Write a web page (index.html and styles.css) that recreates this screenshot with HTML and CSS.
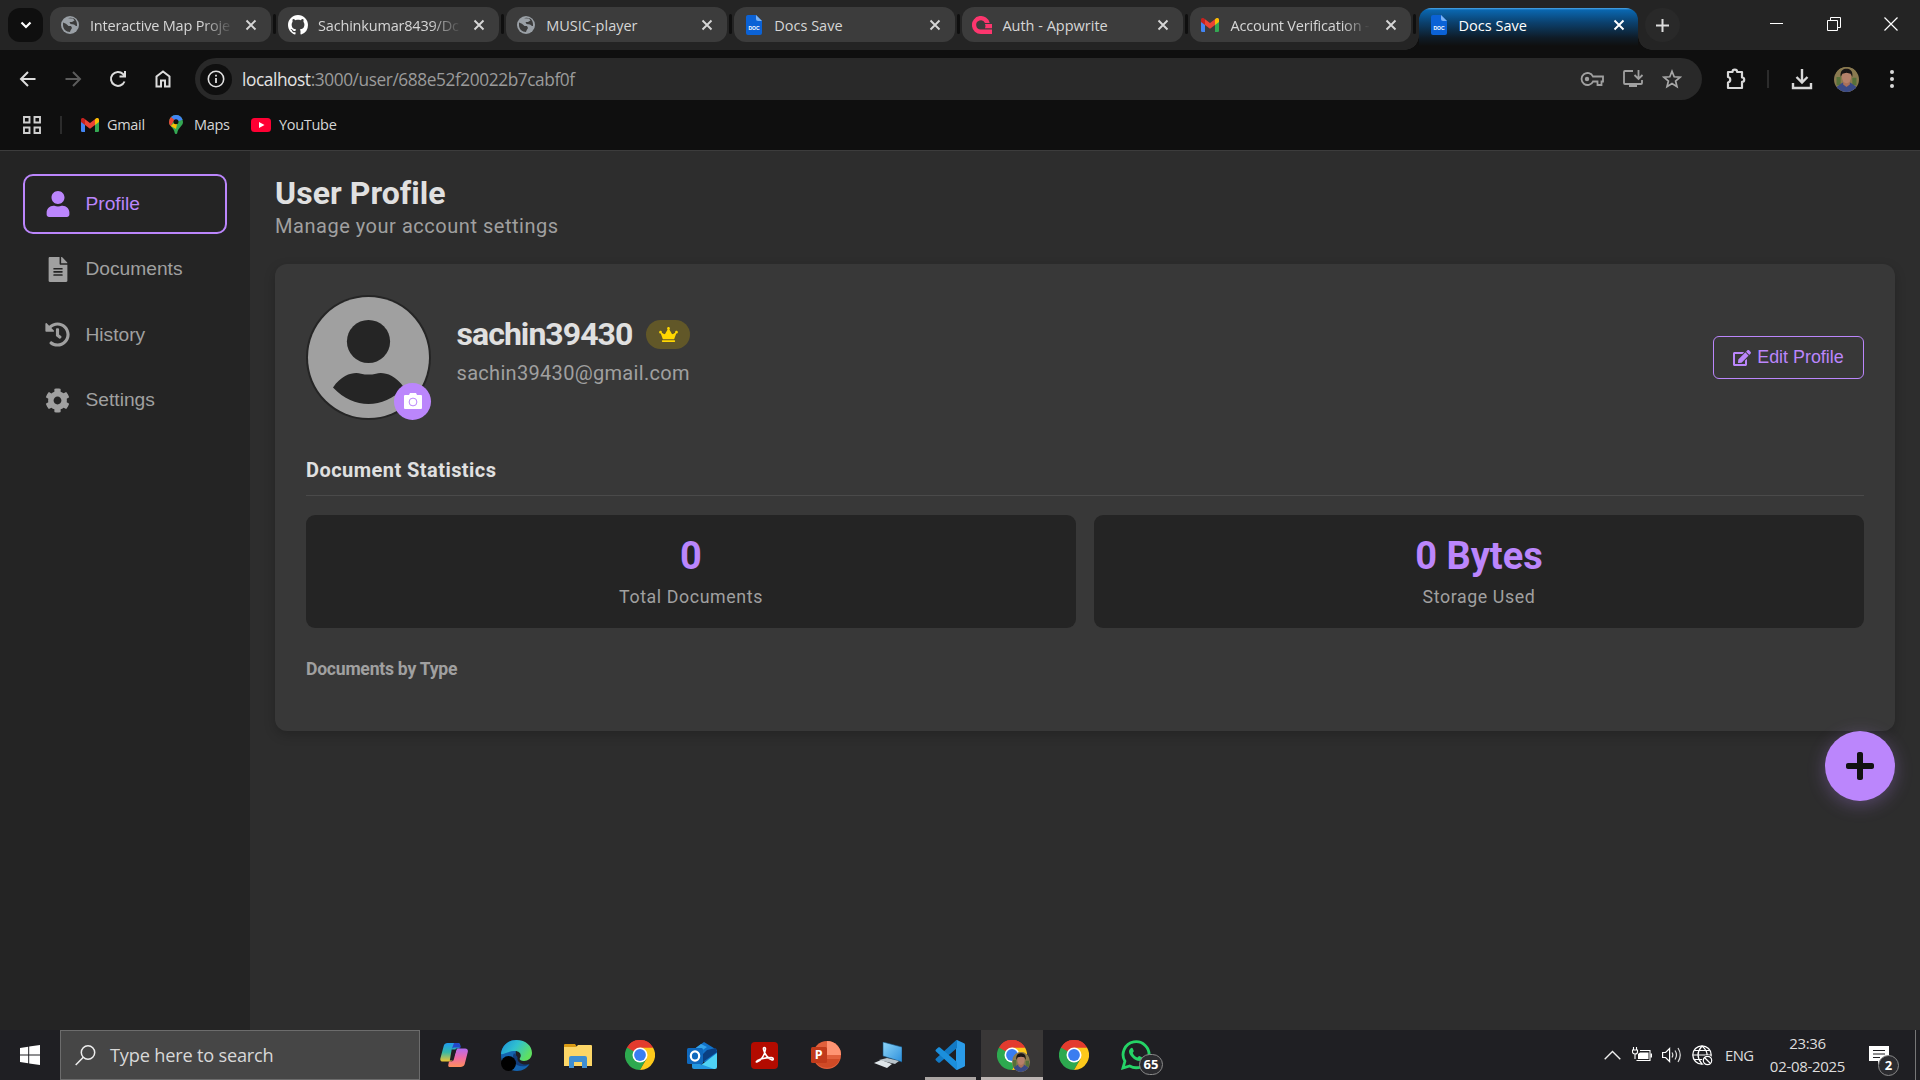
FILE: index.html
```html
<!DOCTYPE html>
<html lang="en">
<head>
<meta charset="utf-8">
<title>Docs Save</title>
<link rel="stylesheet" href="styles.css">
</head>
<body>
<svg class="defs" width="0" height="0">
  <defs>
    <linearGradient id="copA" x1="0" y1="0" x2="0" y2="1"><stop offset="0" stop-color="#1e9bf0"/><stop offset=".5" stop-color="#35b8a8"/><stop offset="1" stop-color="#f2c530"/></linearGradient>
    <linearGradient id="copB" x1="0" y1="0" x2="0" y2="1"><stop offset="0" stop-color="#b36bf0"/><stop offset=".5" stop-color="#ee6ba5"/><stop offset="1" stop-color="#ff8f5a"/></linearGradient>
    <linearGradient id="edgeA" x1="0" y1="0" x2="1" y2=".5"><stop offset="0" stop-color="#1b8fd8"/><stop offset=".5" stop-color="#30c0d0"/><stop offset="1" stop-color="#5fe060"/></linearGradient>
    <linearGradient id="scr" x1="0" y1="0" x2="1" y2="1"><stop offset="0" stop-color="#8fd6f8"/><stop offset="1" stop-color="#2c8fdc"/></linearGradient>
    <symbol id="globe" viewBox="0 0 18 18"><circle cx="9" cy="9" r="9" fill="#9aa0a6"/><path d="M2 6.500l3 1.200 2.500 2.300H10l1 2-1.500 2.500L9 16C5 16 2 13 2 9zM7 2.200l5 .2 1.500 2L11 6H8.500L9.500 8l3.500.500 2 1.500 1 0C16.500 5 14 1.500 9 1.800z" fill="#3c3c3c"/></symbol>
    <symbol id="docfile" viewBox="0 0 16 20"><path d="M2 0h8l6 6v12a2 2 0 0 1-2 2H2a2 2 0 0 1-2-2V2a2 2 0 0 1 2-2z" fill="#0b62d6"/><path d="M10 0l6 6h-4a2 2 0 0 1-2-2z" fill="#7ab2f5"/><text x="8" y="14.500" text-anchor="middle" class="doc-label">DOC</text></symbol>
    <symbol id="gmail" viewBox="0 0 18 14"><path d="M0 2v10.800A1.200 1.200 0 0 0 1.200 14H4V5z" fill="#4285f4"/><path d="M18 2v10.800a1.200 1.200 0 0 1-1.200 1.200H14V5z" fill="#34a853"/><path d="M14 1.200V7l4-3V1.800C18 0 16-.6 14.800.5z" fill="#fbbc04"/><path d="M4 1.200V7L0 4V1.800C0 0 2-.6 3.200.5z" fill="#c5221f"/><path d="M4 1.200l5 3.800 5-3.800V7l-5 3.800L4 7z" fill="#ea4335"/></symbol>
    <symbol id="chrome" viewBox="0 0 30 30"><path d="M15 15L2 7.500A15 15 0 0 1 28 7.500z" fill="#e33b2e"/><path d="M2 7.500A15 15 0 0 0 15 30l6.500-11.200L15 15z" fill="#2da94f"/><path d="M28 7.500A15 15 0 0 1 15 30l6.500-11.200L15 15V7.500z" fill="#fdc91b"/><path d="M2 7.500L8.500 18.700 15 15V7.500z" fill="#2da94f"/><path d="M2 7.500A15 15 0 0 1 28 7.500H15l-6.500 3.700z" fill="#e33b2e"/><circle cx="15" cy="15" r="7.500" fill="#fff"/><circle cx="15" cy="15" r="5.900" fill="#3a7df0"/></symbol>
    <symbol id="face" viewBox="0 0 24 30"><rect width="24" height="30" fill="#8a7a50"/><path d="M0 12h5v10H0zM19 13h5v9h-5z" fill="#56703a"/><path d="M0 30v-6l7-5h10l7 5v6z" fill="#3a4a86"/><path d="M8 17h8v4l-4 3-4-3z" fill="#a9705a"/><ellipse cx="12" cy="12" rx="5.500" ry="7.500" fill="#b5806a"/><path d="M5 12C4 4 8 2 12 2s8 2 7 10l-2-4-5-1-5 1z" fill="#1a1516"/></symbol>
    <symbol id="x" viewBox="0 0 12 12"><path d="M1.500 1.500l9 9M10.500 1.500l-9 9" stroke="currentColor" stroke-width="1.900" fill="none"/></symbol>
  </defs>
</svg>

<header class="tabstrip">
  <button class="tab-search"><svg width="12" height="8" viewBox="0 0 12 8"><path d="M1.500 1.500L6 6l4.500-4.500" stroke="#fff" stroke-width="2.200" fill="none"/></svg></button>
  <div class="tabs">
    <div class="tab"><svg class="fav" width="18" height="18"><use href="#globe"/></svg><span class="tab-title fade">Interactive Map Proje</span><svg class="close" width="12" height="12"><use href="#x"/></svg></div>
    <div class="tab"><svg class="fav" width="20" height="20" viewBox="0 0 16 16"><path fill="#fff" d="M8 0C3.580 0 0 3.580 0 8c0 3.540 2.290 6.530 5.470 7.590.4.070.55-.17.55-.38 0-.19-.01-.82-.01-1.490-2.010.37-2.530-.49-2.690-.94-.09-.23-.48-.94-.82-1.130-.28-.15-.68-.52-.01-.53.63-.01 1.080.58 1.230.82.72 1.210 1.870.87 2.330.66.07-.52.28-.87.51-1.070-1.780-.2-3.640-.89-3.640-3.950 0-.87.31-1.590.82-2.150-.08-.2-.36-1.020.08-2.120 0 0 .67-.21 2.200.82.640-.18 1.320-.27 2-.27s1.360.09 2 .27c1.530-1.040 2.200-.82 2.200-.82.44 1.100.16 1.920.08 2.120.51.56.82 1.270.82 2.150 0 3.070-1.870 3.750-3.650 3.950.29.25.54.73.54 1.480 0 1.070-.01 1.930-.01 2.200 0 .21.15.46.55.38A8.010 8.010 0 0 0 16 8c0-4.420-3.580-8-8-8z"/></svg><span class="tab-title fade">Sachinkumar8439/Dc</span><svg class="close" width="12" height="12"><use href="#x"/></svg></div>
    <div class="tab"><svg class="fav" width="18" height="18"><use href="#globe"/></svg><span class="tab-title">MUSIC-player</span><svg class="close" width="12" height="12"><use href="#x"/></svg></div>
    <div class="tab"><svg class="fav" width="16" height="20"><use href="#docfile"/></svg><span class="tab-title">Docs Save</span><svg class="close" width="12" height="12"><use href="#x"/></svg></div>
    <div class="tab"><svg class="fav" width="20" height="18" viewBox="0 0 20 18"><path d="M20 13.500V18H9A9 9 0 1 1 17.700 7H13A4.600 4.600 0 1 0 9 13.500z" fill="#fd366e"/><path d="M20 8v4.200h-7A4.600 4.600 0 0 0 13 8z" fill="#fd366e"/></svg><span class="tab-title">Auth - Appwrite</span><svg class="close" width="12" height="12"><use href="#x"/></svg></div>
    <div class="tab"><svg class="fav" width="18" height="14"><use href="#gmail"/></svg><span class="tab-title fade short">Account Verification -</span><svg class="close" width="12" height="12"><use href="#x"/></svg></div>
    <div class="tab active"><svg class="fav" width="16" height="20"><use href="#docfile"/></svg><span class="tab-title">Docs Save</span><svg class="close" width="12" height="12"><use href="#x"/></svg></div>
  </div>
  <button class="newtab"><svg width="13" height="13" viewBox="0 0 13 13"><path d="M6.500 0v13M0 6.500h13" stroke="#ddd" stroke-width="2"/></svg></button>
  <div class="winctl">
    <svg width="14" height="14" viewBox="0 0 14 14"><path d="M0 6.500h13" stroke="#fff"/></svg>
    <svg width="14" height="14" viewBox="0 0 14 14"><path d="M.5 3.500h10v10H.5zM3.500 3V.500h10v10H11" stroke="#fff" fill="none"/></svg>
    <svg width="14" height="14" viewBox="0 0 14 14"><path d="M.5.5l13 13M13.500.5l-13 13" stroke="#fff" stroke-width="1.200"/></svg>
  </div>
</header>

<nav class="toolbar">
  <div class="navbtns">
    <svg width="20" height="20" viewBox="0 0 20 20"><path d="M17.500 10H3.500M10 3L3 10l7 7" stroke="#dcdcdc" stroke-width="2" fill="none"/></svg>
    <svg width="20" height="20" viewBox="0 0 20 20"><path d="M2.500 10h14M10 3l7 7-7 7" stroke="#5c5c5c" stroke-width="2" fill="none"/></svg>
    <svg width="20" height="20" viewBox="0 0 20 20"><path d="M16.500 12.500A7 7 0 1 1 15 5l1.500 1.700M17 2v5.500h-5.500" stroke="#dcdcdc" stroke-width="2" fill="none"/></svg>
    <svg width="20" height="20" viewBox="0 0 20 20"><path d="M3.500 17.500V7.500L10 2.500l6.500 5v10H12v-6H8v6z" stroke="#dcdcdc" stroke-width="2" fill="none"/></svg>
  </div>
  <div class="omnibox">
    <span class="info"><svg width="18" height="18" viewBox="0 0 18 18"><circle cx="9" cy="9" r="7.700" stroke="#e0e0e0" stroke-width="1.600" fill="none"/><path d="M9 8v5M9 4.700v1.800" stroke="#e0e0e0" stroke-width="1.800"/></svg></span>
    <span class="url"><b>localhost</b>:3000/user/688e52f20022b7cabf0f</span>
    <span class="omni-icons">
      <svg width="24" height="16" viewBox="0 0 24 16"><path d="M13 5.500A6 6 0 1 0 13 10.500h4.500V14h4v-3.500H23v-5z" fill="none" stroke="#a0a0a0" stroke-width="1.800"/><circle cx="7" cy="8" r="2.200" fill="#a0a0a0"/></svg>
      <svg width="22" height="20" viewBox="0 0 22 20"><path d="M11 2H3a1 1 0 0 0-1 1v11a1 1 0 0 0 1 1h16a1 1 0 0 0 1-1v-3M16.500 1v8.500M12.500 6l4 4 4-4" fill="none" stroke="#a0a0a0" stroke-width="1.800"/><path d="M7 15h8v3H7z" fill="#a0a0a0"/></svg>
      <svg width="20" height="20" viewBox="0 0 20 20"><path d="M10 2.300l2.200 5.500 5.900.4-4.500 3.800 1.400 5.700-5-3.100-5 3.100 1.400-5.700L1.900 8.200l5.900-.4z" fill="none" stroke="#a8a8a8" stroke-width="1.700"/></svg>
    </span>
  </div>
  <div class="tools">
    <svg width="22" height="22" viewBox="0 0 22 22"><path d="M3 4h4.500a2.300 2.300 0 0 1 4.600 0H17v5.500a2.200 2.200 0 0 1 0 4.400V20H3v-5.500a2.800 2.800 0 0 0 0-5.500z" fill="none" stroke="#d8d8d8" stroke-width="2.200" stroke-linejoin="round"/></svg>
    <i class="sep"></i>
    <svg width="22" height="22" viewBox="0 0 22 22"><path d="M11 1v13M5.500 9l5.500 5.500L16.500 9M2 15v5h18v-5" fill="none" stroke="#d8d8d8" stroke-width="2.400"/></svg>
    <span class="me"><svg width="25" height="25"><use href="#face"/></svg></span>
    <svg class="dots" width="6" height="20" viewBox="0 0 6 20"><circle cx="3" cy="3" r="2" fill="#d8d8d8"/><circle cx="3" cy="10" r="2" fill="#d8d8d8"/><circle cx="3" cy="17" r="2" fill="#d8d8d8"/></svg>
  </div>
</nav>

<div class="bookmarks">
  <svg class="apps" width="18" height="18" viewBox="0 0 18 18"><path d="M1 1h5.500v5.500H1zM11.500 1H17v5.500h-5.500zM1 11.500h5.500V17H1zM11.500 11.500H17V17h-5.500z" stroke="#cfcfcf" stroke-width="1.900" fill="none"/></svg>
  <i class="sep"></i>
  <a class="bm gm"><svg width="18" height="14"><use href="#gmail"/></svg><span>Gmail</span></a>
  <a class="bm mp"><svg width="14" height="19" viewBox="0 0 14 19"><path d="M7 0a7 7 0 0 1 7 7c0 4-5 5.500-5.800 11.200-.3 1.100-2.100 1.100-2.400 0C5 12.500 0 11 0 7a7 7 0 0 1 7-7z" fill="#34a853"/><path d="M7 0a7 7 0 0 1 6.600 4.700L7 7 2 2.100A7 7 0 0 1 7 0z" fill="#4285f4"/><path d="M2 2.100L5.500 5 1.700 11C.7 9.900 0 8.700 0 7a7 7 0 0 1 2-4.900z" fill="#ea4335"/><path d="M1.700 11L9 4.500 7 14z" fill="#fbbc04"/><circle cx="7" cy="6.800" r="2.500" fill="#101010"/></svg><span>Maps</span></a>
  <a class="bm yt"><svg width="20" height="14" viewBox="0 0 20 14"><rect width="20" height="14" rx="3.500" fill="#ff0033"/><path d="M8 4l5.500 3L8 10z" fill="#fff"/></svg><span>YouTube</span></a>
</div>

<main class="page">
  <aside class="sidebar">
    <a class="item on"><svg width="24" height="26" viewBox="0 0 448 512"><path d="M224 256c70.700 0 128-57.300 128-128S294.700 0 224 0 96 57.300 96 128s57.300 128 128 128zm89.600 32h-16.700c-22.200 10.200-46.900 16-72.900 16s-50.600-5.800-72.900-16h-16.700C60.200 288 0 348.200 0 422.400V464c0 26.500 21.500 48 48 48h352c26.500 0 48-21.500 48-48v-41.600c0-74.200-60.200-134.400-134.400-134.400z"/></svg><span>Profile</span></a>
    <a class="item"><svg width="24" height="25" viewBox="0 0 384 512"><path d="M224 136V0H24C10.700 0 0 10.700 0 24v464c0 13.300 10.700 24 24 24h336c13.300 0 24-10.700 24-24V160H248c-13.200 0-24-10.800-24-24zm64 236c0 6.600-5.400 12-12 12H108c-6.600 0-12-5.400-12-12v-8c0-6.600 5.400-12 12-12h168c6.600 0 12 5.400 12 12v8zm0-64c0 6.600-5.400 12-12 12H108c-6.600 0-12-5.400-12-12v-8c0-6.600 5.400-12 12-12h168c6.600 0 12 5.400 12 12v8zm0-72v8c0 6.600-5.400 12-12 12H108c-6.600 0-12-5.400-12-12v-8c0-6.600 5.400-12 12-12h168c6.600 0 12 5.400 12 12zm96-114.100v6.100H256V0h6.100c6.400 0 12.500 2.500 17 7l97.900 98c4.500 4.500 7 10.600 7 16.900z"/></svg><span>Documents</span></a>
    <a class="item"><svg width="25" height="25" viewBox="0 0 512 512"><path d="M504 255.531c.253 136.640-111.180 248.372-247.820 248.468-59.015.042-113.223-20.530-155.822-54.911-11.077-8.940-11.905-25.541-1.839-35.607l11.267-11.267c8.609-8.609 22.353-9.551 31.891-1.984C173.062 425.135 212.781 440 256 440c101.705 0 184-82.311 184-184 0-101.705-82.311-184-184-184-48.814 0-93.149 18.969-126.068 49.932l50.754 50.754c10.080 10.080 2.941 27.314-11.313 27.314H24c-8.837 0-16-7.163-16-16V38.627c0-14.254 17.234-21.393 27.314-11.314l49.372 49.372C129.209 34.136 189.552 8 256 8c136.810 0 247.747 110.780 248 247.531zm-180.912 78.784l9.823-12.630c8.138-10.463 6.253-25.542-4.210-33.679L288 256.349V152c0-13.255-10.745-24-24-24h-16c-13.255 0-24 10.745-24 24v135.651l65.409 50.874c10.463 8.137 25.541 6.253 33.679-4.210z"/></svg><span>History</span></a>
    <a class="item"><svg width="25" height="25" viewBox="0 0 512 512"><path d="M487.400 315.700l-42.600-24.600c4.300-23.200 4.300-47 0-70.200l42.600-24.600c4.900-2.800 7.100-8.600 5.500-14-11.100-35.600-30-67.800-54.700-94.600-3.800-4.100-10-5.100-14.800-2.300L380.800 110c-17.900-15.400-38.500-27.300-60.800-35.100V25.800c0-5.600-3.900-10.500-9.400-11.700-36.700-8.200-74.300-7.800-109.200 0-5.500 1.200-9.400 6.100-9.400 11.700V75c-22.200 7.900-42.800 19.800-60.800 35.100L88.700 85.500c-4.900-2.800-11-1.900-14.800 2.300-24.700 26.700-43.600 58.900-54.700 94.600-1.700 5.400.6 11.200 5.500 14L67.300 221c-4.300 23.200-4.300 47 0 70.200l-42.600 24.600c-4.900 2.800-7.100 8.600-5.500 14 11.100 35.600 30 67.800 54.700 94.600 3.800 4.100 10 5.100 14.800 2.300l42.600-24.600c17.900 15.400 38.500 27.300 60.800 35.100v49.200c0 5.600 3.900 10.500 9.400 11.700 36.700 8.200 74.300 7.800 109.200 0 5.500-1.200 9.400-6.100 9.400-11.700v-49.200c22.200-7.900 42.800-19.800 60.800-35.100l42.600 24.600c4.900 2.800 11 1.900 14.800-2.300 24.700-26.700 43.600-58.900 54.700-94.600 1.500-5.500-.7-11.300-5.600-14.100zM256 336c-44.100 0-80-35.900-80-80s35.900-80 80-80 80 35.900 80 80-35.900 80-80 80z"/></svg><span>Settings</span></a>
  </aside>
  <section class="content">
    <h1>User Profile</h1>
    <p class="sub">Manage your account settings</p>
    <div class="card">
      <div class="head">
        <div class="avatar">
          <svg width="125" height="125" viewBox="0 0 125 125"><circle cx="62.500" cy="62.500" r="62.500" fill="#252525"/><circle cx="62.500" cy="62.500" r="60.500" fill="#a0a0a0"/><circle cx="62.500" cy="46.500" r="21.600" fill="#252525"/><path d="M27 92.500C37 78 49 77 55 78.700q7.500 1.800 15 0C76 77 88 78 98 92.500 87 104 75 109 62.500 109S38 104 27 92.500z" fill="#252525"/></svg>
          <span class="cam"><svg width="18" height="17" viewBox="0 0 18 17"><path d="M1 2h4l1-2h6l1 2h4a1 1 0 0 1 1 1v12a1 1 0 0 1-1 1H1a1 1 0 0 1-1-1V3a1 1 0 0 1 1-1z" fill="#fff"/><circle cx="9" cy="9" r="3.900" fill="none" stroke="#bb86fc" stroke-width="1"/></svg></span>
        </div>
        <div class="who">
          <div class="name"><span>sachin39430</span><i class="crown"><svg width="19" height="15" viewBox="0 0 640 512"><path d="M528 448H112c-8.800 0-16 7.200-16 16v32c0 8.800 7.200 16 16 16h416c8.800 0 16-7.200 16-16v-32c0-8.800-7.200-16-16-16zm64-320c-26.500 0-48 21.500-48 48 0 7.100 1.600 13.700 4.400 19.800L476 239.200c-15.400 9.200-35.300 4-44.200-11.600L350.300 85C361 76.200 368 63 368 48c0-26.500-21.500-48-48-48s-48 21.500-48 48c0 15 7 28.200 17.700 37l-81.500 142.600c-8.900 15.600-28.900 20.800-44.200 11.600l-72.300-43.400c2.700-6 4.400-12.700 4.400-19.800 0-26.500-21.500-48-48-48S0 149.500 0 176s21.500 48 48 48c2.600 0 5.200-.4 7.700-.8L128 416h384l72.300-192.800c2.500.4 5.100.8 7.700.8 26.500 0 48-21.500 48-48s-21.500-48-48-48z" fill="#ffd700"/></svg></i></div>
          <div class="email">sachin39430@gmail.com</div>
        </div>
        <button class="edit"><svg width="18" height="16" viewBox="0 0 576 512"><path d="M402.600 83.200l90.200 90.200c3.800 3.800 3.800 10 0 13.800L274.400 405.600l-92.800 10.300c-12.400 1.400-22.900-9.100-21.500-21.500l10.300-92.800L388.800 83.200c3.800-3.800 10-3.800 13.800 0zm162-22.900l-48.800-48.800c-15.200-15.200-39.900-15.200-55.200 0l-35.400 35.400c-3.800 3.800-3.800 10 0 13.800l90.200 90.200c3.800 3.800 10 3.800 13.800 0l35.400-35.400c15.200-15.300 15.200-40 0-55.200zM384 346.200V448H64V128h229.800c3.200 0 6.200-1.300 8.500-3.500l40-40c7.600-7.600 2.200-20.500-8.500-20.500H48C21.500 64 0 85.500 0 112v352c0 26.500 21.500 48 48 48h352c26.500 0 48-21.500 48-48V306.200c0-10.700-12.900-16-20.500-8.500l-40 40c-2.200 2.300-3.500 5.300-3.500 8.500z" fill="#bb86fc"/></svg><span>Edit Profile</span></button>
      </div>
      <h2>Document Statistics</h2>
      <div class="stats">
        <div class="stat"><div class="num">0</div><div class="lbl">Total Documents</div></div>
        <div class="stat"><div class="num">0 Bytes</div><div class="lbl">Storage Used</div></div>
      </div>
      <h3>Documents by Type</h3>
    </div>
  </section>
  <button class="fab"><svg width="28" height="32" viewBox="0 0 448 512"><path d="M416 208H272V64c0-17.670-14.330-32-32-32h-32c-17.670 0-32 14.330-32 32v144H32c-17.670 0-32 14.330-32 32v32c0 17.670 14.330 32 32 32h144v144c0 17.670 14.330 32 32 32h32c17.670 0 32-14.330 32-32V304h144c17.670 0 32-14.330 32-32v-32c0-17.670-14.330-32-32-32z" fill="#121212"/></svg></button>
</main>

<footer class="taskbar">
  <div class="start"><svg width="20" height="20" viewBox="0 0 20 20"><path d="M0 2.900L8.200 1.700v7.800H0zM9.200 1.600L20 0v9.500H9.200zM0 10.500h8.200v7.800L0 17.100zM9.200 10.500H20V20L9.200 18.400z" fill="#fff"/></svg></div>
  <div class="search"><svg width="21" height="21" viewBox="0 0 21 21"><circle cx="13" cy="7.500" r="6.700" fill="none" stroke="#eee" stroke-width="1.500"/><path d="M8.300 12.300L.7 20" stroke="#eee" stroke-width="1.500"/></svg><span>Type here to search</span></div>
  <div class="apps-row">
    <div class="app"><svg width="28" height="26" viewBox="0 0 30 28"><path d="M8 1h11c2 0 3 1 2.500 3L21 7h-4L13 20c-.6 1.500-1.500 1-2 1H3c-3 0-3-2-2.500-4L4 4c.6-2 2-3 4-3z" fill="url(#copA)"/><path d="M15 1h4c2 0 3 2 3.500 5h-6c-2 0-3 0-4 2z" fill="#2447c9"/><path d="M22 27H11c-2 0-2.500-1-2-3l.6-3H13l4.500-12c.6-2 1.500-2 2.500-2h7c3 0 3.500 2 2.500 5l-3 12c-.7 2-2.500 3-4.500 3z" fill="url(#copB)"/><path d="M12.500 8h5L14.500 20h-4z" fill="#1f1f23"/></svg></div>
    <div class="app"><svg width="31" height="31" viewBox="0 0 31 31"><path d="M15.500 0C7 0 0 6 0 15.500 0 24 7 31 16 31c6 0 10-3 12.500-7-9 4-15-1-14-8z" fill="#1464b0"/><path d="M0 14C1 5 8 0 15.500 0 25 0 31 6 31 13c0 5-4 8-8 8-4 0-5-2-4-3 2-3 0-7-5-7-7 0-12 4-14 3z" fill="url(#edgeA)"/><path d="M13 13c-4 8 2 15 12 13l3.500-2c-6 2-13-1-12-7z" fill="#123c7a"/><circle cx="7.500" cy="23.500" r="7.500" fill="#000"/></svg></div>
    <div class="app"><svg width="28" height="25" viewBox="0 0 28 25"><path d="M0 2a1 1 0 0 1 1-1h10l2 3H0z" fill="#d99a14"/><path d="M0 4h12l2-2h13a1 1 0 0 1 1 1v20H0z" fill="#fcd667"/><path d="M5 25V15a2 2 0 0 1 2-2h14a2 2 0 0 1 2 2v10h-5v-6h-8v6z" fill="#3e8ed2"/></svg></div>
    <div class="app"><svg width="30" height="30"><use href="#chrome"/></svg></div>
    <div class="app"><svg width="30" height="27" viewBox="0 0 30 27"><path d="M6 8L17 0l13 8v5L18 20 6 15z" fill="#1272c9"/><path d="M14 2l6 3-10 7-4-4z" fill="#35a3ea"/><path d="M20 8l9-2 1 4-14 10-3-5z" fill="#0a3f82"/><path d="M30 11v14a2 2 0 0 1-2 2H9l21-16z" fill="#4fd2f5"/><path d="M5 19l22 8H7a2 2 0 0 1-2-2z" fill="#2397e0"/><rect y="6" width="16" height="16" rx="1.500" fill="#0f68bd"/><ellipse cx="8" cy="14" rx="4.200" ry="4.600" fill="none" stroke="#fff" stroke-width="2.200"/></svg></div>
    <div class="app"><svg width="27" height="27" viewBox="0 0 27 27"><rect width="27" height="27" rx="4" fill="#b30b00"/><path d="M6 20c3-.5 8-6.500 8.500-13 0-2-2.500-2-2 .3C13.200 11 17 17 21 18c2 0 1.600-2.400-.5-2.400-4 0-11 1.200-14.300 3.200-1 .7-1.200 1.500-.2 1.200z" fill="none" stroke="#fff" stroke-width="1.600"/></svg></div>
    <div class="app"><svg width="30" height="28" viewBox="0 0 30 28"><circle cx="16" cy="14" r="14" fill="#e2603c"/><path d="M16 0a14 14 0 0 1 14 14H16z" fill="#ff9473"/><path d="M3 18a14 14 0 0 0 26 0z" fill="#d04a26"/><rect y="6" width="16" height="16" rx="1.500" fill="#c13b1b"/><text x="7.800" y="18.300" class="ppt-label" text-anchor="middle">P</text></svg></div>
    <div class="app"><svg width="28" height="26" viewBox="0 0 28 26"><path d="M9 0l19 5v15L9 14z" fill="url(#scr)" stroke="#14507c" stroke-width=".6"/><path d="M5 18l16 4 4-3-12-3z" fill="#b9c4cb"/><path d="M0 21l7-3 11 4-5 4z" fill="#dfe6ea"/></svg></div>
    <div class="app run"><svg width="30" height="30" viewBox="0 0 30 30"><path d="M22 0l7 3.300c.6.300 1 .8 1 1.500v20.400c0 .7-.4 1.200-1 1.500L22 30l-1-1V1z" fill="#2a9be8"/><path d="M22 0v8L5 22.500c-.6.500-1.300.4-1.800 0L1 20.500c-.7-.6-.6-1.500 0-2L20.500.8C21 .3 21.500 0 22 0z" fill="#1279c4"/><path d="M22 30v-8L5 7.500C4.400 7 3.700 7.100 3.200 7.500L1 9.500c-.7.6-.6 1.500 0 2l19.500 17.700c.5.500 1 .8 1.500.8z" fill="#1b8fdc"/></svg></div>
    <div class="app focus"><svg width="30" height="30"><use href="#chrome"/></svg><span class="pic"><svg width="18" height="20"><use href="#face"/></svg></span></div>
    <div class="app"><svg width="30" height="30"><use href="#chrome"/></svg></div>
    <div class="app"><svg width="30" height="30" viewBox="0 0 30 30"><path d="M2 28l1.900-6.700A13 13 0 1 1 8.700 26z" fill="none" stroke="#25d366" stroke-width="2.800"/><path d="M9.500 8.500c1-1 2-.8 2.300 0l1 2.500c0 .8-1 1.500-1 2 .8 2 2.400 3.600 4.500 4.500.6 0 1.200-1.500 2-1.500l2.700 1.300c1 1-.3 3.500-2.500 3.700-5 0-10.500-6-10.500-9.500 0-1 .5-2.200 1.500-3z" fill="#25d366"/></svg><span class="count">65</span></div>
  </div>
  <div class="tray">
    <svg width="17" height="10" viewBox="0 0 17 10"><path d="M.7 9.300L8.500 1.500l7.800 7.800" fill="none" stroke="#eee" stroke-width="1.400"/></svg>
    <svg width="20" height="16" viewBox="0 0 20 16"><path d="M1.500 0v3M4.500 0v3M.5 3h5v2c0 1.500-1 2-2.500 2S.5 6.500.5 5zM3 7v5M4.500 13.500h13.500v-10H8" fill="none" stroke="#fff" stroke-width="1.100"/><path d="M6 7l2-1.500h8.500v6.500H6zM18.500 6.500H20v4h-1.500z" fill="#fff"/></svg>
    <svg width="20" height="18" viewBox="0 0 20 18"><path d="M.6 6.500h3l4-4v13l-4-4h-3z" fill="none" stroke="#fff" stroke-width="1.200"/><path d="M10 6.500q1.600 2.500 0 5M13 4.500q3 4.500 0 9M16 2q4.500 7 0 14" fill="none" stroke="#ddd" stroke-width="1.200"/></svg>
    <svg width="21" height="21" viewBox="0 0 21 21"><circle cx="10" cy="10" r="9.200" fill="none" stroke="#fff" stroke-width="1.300"/><path d="M1 10h18M2.500 5.500h15M2.500 14.500h10M10 1q-8 9 0 18M10 1q6 5 5 11" fill="none" stroke="#fff" stroke-width="1.200"/><circle cx="15.500" cy="15.500" r="5.500" fill="#1f1f23"/><circle cx="15.500" cy="15.500" r="4.200" fill="none" stroke="#fff" stroke-width="1.200"/><path d="M12.500 12.500l6 6" stroke="#fff" stroke-width="1.200"/></svg>
    <span class="lang">ENG</span>
    <div class="clock"><span>23:36</span><span>02-08-2025</span></div>
    <div class="notif"><svg width="20" height="19" viewBox="0 0 20 19"><path d="M0 0h20v15h-7l-4 4v-4H0z" fill="#fff"/><path d="M4 4.500h12M4 8h12M4 11.500h7" stroke="#1f1f23" stroke-width="1.200"/></svg><span class="count two">2</span></div>
    <i class="peek"></i>
  </div>
</footer>
</body>
</html>
```
FILE: styles.css
```css
* { box-sizing: border-box; }
body { margin: 0; width: 1920px; height: 1080px; overflow: hidden; display: flex; flex-direction: column; background: #0f0f0f; font-family: "Open Sans", "Noto Sans", sans-serif; color: #ddd; }
button { border: 0; padding: 0; background: none; display: flex; align-items: center; justify-content: center; }
h1, h2, h3, p { margin: 0; }
svg { display: block; flex: none; }
span { white-space: nowrap; }
.defs { position: absolute; }
.doc-label { font: 700 5px "Liberation Sans", sans-serif; fill: #fff; }
.ppt-label { font: 700 12.500px "Open Sans", sans-serif; fill: #fff; }

/* tab strip */
.tabstrip { height: 50px; flex: none; background: #242424; display: flex; align-items: flex-start; padding-left: 8px; }
.tab-search { width: 35px; height: 34px; margin-top: 8px; border-radius: 12px; background: #0f0f0f; }
.tabs { display: flex; gap: 7.600px; padding: 7px 0 0 7px; height: 50px; }
.tab { position: relative; width: 220.500px; height: 35px; border-radius: 12px; background: #3c3c3c; display: grid; grid-template-columns: 40px 1fr 25.500px; align-items: center; font-size: 14.500px; color: #d6d6d6; }
.tab:not(:last-child)::after { content: ""; position: absolute; left: 223px; top: 7px; width: 3px; height: 20px; border-radius: 2px; background: #0f0f0f; }
.fav { justify-self: center; }
.tab-title { padding-top: 1px; }
.tab-title.fade { letter-spacing: -0.200px; mask-image: linear-gradient(90deg, #000 112px, transparent 144px); }
.tab-title.short { mask-image: linear-gradient(90deg, #000 112px, transparent 140px); }
.active { width: 219.500px; color: #fff; height: 42px; margin-top: 1px; padding-bottom: 9px; border-radius: 12px 12px 0 0; background: linear-gradient(#4fa9ea 0, #0a67b0 2px, #0b4270 14px, #0f1b26 30px, #0f0f0f 38px); }
.active::before, .tab.active::after { content: ""; position: absolute; bottom: 0; left: -14px; top: auto; width: 14px; height: 14px; background: radial-gradient(circle at 0 0, transparent 13.500px, #0f0f0f 14px); }
.tab.active::after { left: 219.500px; border-radius: 0; background: radial-gradient(circle at 100% 0, transparent 13.500px, #0f0f0f 14px); }
.newtab { position: relative; width: 35px; height: 34px; margin: 8px 0 0 7px; border-radius: 17px; background: #292929; }
.winctl { margin-left: auto; margin-right: 22px; padding-top: 17px; display: flex; gap: 43px; }

/* toolbar */
.toolbar { height: 58px; flex: none; display: flex; align-items: center; padding-left: 18px; }
.navbtns { display: flex; gap: 25px; width: 177px; }
.omnibox { width: 1507px; height: 42px; border-radius: 21px; background: #292929; display: flex; align-items: center; padding: 0 20px 0 5px; }
.info { width: 32px; height: 31px; border-radius: 16px; background: #0f0f0f; display: grid; place-items: center; }
.url { margin-left: 10px; padding-top: 1px; font-size: 17.300px; color: #9b9b9b; letter-spacing: -0.420px; }
.url b { font-weight: 400; color: #e4e4e4; }
.omni-icons { margin-left: auto; display: flex; align-items: center; gap: 18px; }
.tools { display: flex; align-items: center; padding-left: 23px; }
.sep { width: 2px; height: 18px; background: #2c2c2c; }
.tools .sep { margin: 0 22px 0 20px; }
.me { width: 25px; height: 25px; margin: 0 30px 0 21px; border-radius: 50%; overflow: hidden; background: #8a7a50; }
.bookmarks { height: 42px; flex: none; display: flex; align-items: center; padding: 0 0 9px 23px; font-size: 14.500px; color: #d6d6d6; }
.bookmarks .sep { margin: 0 19px 0 19px; }
.bm { display: flex; align-items: center; gap: 8px; letter-spacing: -0.300px; }
.bm.gm { width: 88px; }
.bm.mp { width: 82px; gap: 11px; }

/* application page */
.page { position: relative; height: 880px; flex: none; display: flex; border-top: 1px solid #3c3c3c; background: #2d2d2d; }
.sidebar { width: 250px; background: #242424; padding: 23px 23px 0; display: flex; flex-direction: column; gap: 5.400px; font-family: "Liberation Sans", sans-serif; font-size: 19.200px; color: #a0a0a0; }
.item { height: 60px; display: grid; grid-template-columns: 25px 1fr; align-items: center; gap: 15.500px; padding-left: 20px; border: 2px solid transparent; border-radius: 10px; }
.item svg { justify-self: center; fill: currentColor; }
.on { color: #bb86fc; border-color: #bb86fc; }
.content { padding: 23px 25px 0; width: 1670px; font-family: Roboto, sans-serif; color: #e0e0e0; }
h1 { font-size: 32px; line-height: 38px; font-weight: 700; letter-spacing: .05px; }
.sub { font-size: 20px; line-height: 26px; padding-top: 1px; letter-spacing: .53px; color: #a0a0a0; }
.card { margin-top: 25px; height: 467px; border-radius: 12px; background: #383838; box-shadow: 0 4px 12px rgba(0,0,0,.2); padding: 31px 31px 0; }
.head { display: flex; align-items: center; height: 125px; }
.avatar { position: relative; width: 125px; }
.cam { position: absolute; right: 0; bottom: 0; width: 37px; height: 37px; border-radius: 50%; background: #bb86fc; display: grid; place-items: center; }
.who { margin-left: 25.500px; }
.name { display: flex; align-items: center; gap: 14px; font-size: 32px; line-height: 38px; font-weight: 700; letter-spacing: -0.950px; }
.crown { width: 44px; height: 29px; margin-top: 1px; border-radius: 15px; background: #615728; display: grid; place-items: center; }
.email { font-size: 20px; line-height: 24px; margin: 8px 0 15px; letter-spacing: .31px; color: #a0a0a0; }
.edit { margin-left: auto; width: 151px; height: 43px; border: 1px solid #bb86fc; border-radius: 6px; gap: 6px; color: #bb86fc; font: 17.900px "Liberation Sans", sans-serif; }
h2 { margin-top: 37px; height: 39px; border-bottom: 1px solid #4a4a4a; font-size: 20px; line-height: 26px; font-weight: 700; letter-spacing: .45px; }
.stats { display: grid; grid-template-columns: 1fr 1fr; gap: 18px; margin-top: 19px; }
.stat { height: 113px; border-radius: 9px; background: #242424; text-align: center; padding-top: 18px; }
.num { font-size: 38px; line-height: 46px; font-weight: 700; color: #bb86fc; }
.lbl { font-size: 17.800px; line-height: 24px; margin-top: 6px; letter-spacing: .6px; color: #a0a0a0; }
h3 { margin-top: 29px; font-size: 17.600px; line-height: 24px; font-weight: 700; letter-spacing: -0.250px; color: #a0a0a0; }
.fab { position: absolute; left: 1825px; top: 580px; width: 70px; height: 70px; border-radius: 50%; background: #bb86fc; box-shadow: 0 4px 18px rgba(187,134,252,.3); }

/* taskbar */
.taskbar { height: 50px; flex: none; display: flex; background: #1f1f23; }
.start { width: 60px; display: grid; place-items: center; }
.search { width: 360px; border: 1px solid #6c6c6c; background: #464646; display: flex; align-items: center; gap: 14px; padding-left: 14px; font-size: 18.200px; letter-spacing: -0.200px; color: #d8d8d8; }
.apps-row { display: flex; padding-left: 3px; }
.app { position: relative; width: 62px; display: grid; place-items: center; border: solid transparent; border-width: 0 0 3px; padding-top: 3px; }
.run { border-image: linear-gradient(90deg, transparent 6px, #aaa5a3 6px, #aaa5a3 57px, transparent 57px) 0 0 3; }
.focus { background: #393737; border-color: #bdb5b3; }
.pic { position: absolute; left: 31px; top: 22px; width: 18px; height: 20px; border-radius: 50%; overflow: hidden; background: #8a7a50; }
.count { position: absolute; left: 34px; top: 24px; width: 24px; height: 21px; border-radius: 11px; border: 1px solid #8a8a8a; background: #2b2b2f; color: #fff; font-size: 13px; font-weight: 700; line-height: 19px; text-align: center; }
.tray { margin-left: auto; display: grid; grid-template-columns: 28px 30px 30px 33px 38px 102px 51px 6px; align-items: center; width: 316px; }
.lang { font-size: 14.800px; letter-spacing: -0.500px; }
.clock { display: flex; flex-direction: column; align-items: center; font-size: 15px; line-height: 23px; letter-spacing: -0.300px; padding-left: 2px; padding-right: 15px; }
.notif { position: relative; padding-left: 4px; }
.count.two { left: 13px; top: 9px; width: 21px; }
.peek { width: 1px; height: 50px; background: #777; margin-left: -1px; }
```
